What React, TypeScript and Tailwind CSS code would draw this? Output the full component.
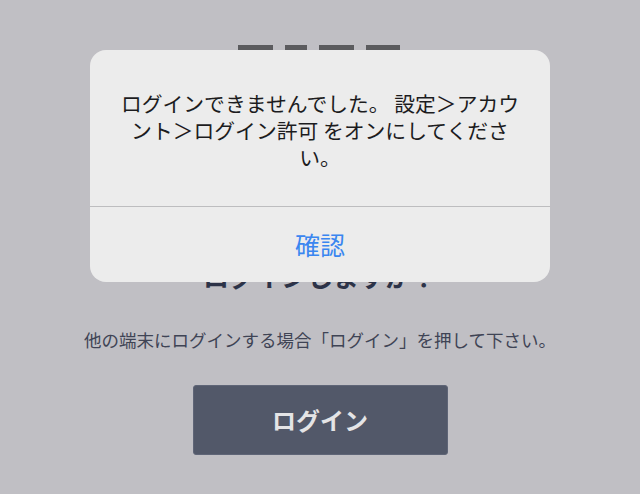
import React from "react";

export default function App() {
  return (
    <div
      className="relative w-[640px] h-[494px] overflow-hidden bg-[#c0bfc4] flex flex-col items-center"
      style={{ fontFamily: '"Noto Sans CJK JP", "Noto Sans", sans-serif' }}
    >
      <div className="mt-[45px] flex gap-[12px] h-[20px] ml-[-2px]">
        <div className="w-[35px] h-full bg-[#5b5b5e]" />
        <div className="w-[22px] h-full bg-[#5b5b5e]" />
        <div className="w-[35px] h-full bg-[#5b5b5e]" />
        <div className="w-[34px] h-full bg-[#5b5b5e]" />
      </div>
      <div className="mt-[198px] text-[26px] leading-[26px] font-bold text-[#2d3348]">
        ログインしますか？
      </div>
      <div className="mt-[39px] text-[17.5px] leading-[24px] text-[#3f4455]">
        他の端末にログインする場合「ログイン」を押して下さい。
      </div>
      <button className="mt-[33px] w-[255px] h-[70px] rounded-[3px] bg-[#525869] border border-[#5f6577] text-[24px] font-bold text-[#e4e4e6] flex items-center justify-center">
        ログイン
      </button>

      <div className="absolute left-[90px] top-[50px] w-[460px] rounded-[16px] bg-[#ececec] flex flex-col">
        <div className="pt-[40px] pb-[35px] px-[10px] text-center text-[20.8px] leading-[27px] text-[#1c1c1e]">
          ログインできませんでした。 設定＞アカウ
          <br />
          ント＞ログイン許可 をオンにしてくださ
          <br />
          い。
        </div>
        <div className="h-px bg-[#bdbdbf]" />
        <div className="h-[75px] flex items-center justify-center text-[25px] text-[#3a86f0]">
          確認
        </div>
      </div>
    </div>
  );
}
